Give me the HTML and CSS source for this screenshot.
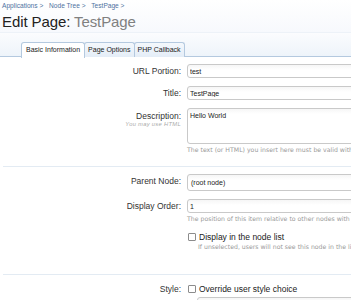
FILE: index.html
```html
<!DOCTYPE html>
<html lang="en">
<head>
  <meta charset="UTF-8">
  <title>Edit Page: TestPage</title>
  <link rel="stylesheet" href="styles.css">
</head>
<body>
  <div class="titleBar">
    <div class="breadcrumb">
      <a href="#">Applications &gt;</a>
      <a href="#">Node Tree &gt;</a>
      <a href="#">TestPage &gt;</a>
    </div>
    <h1>Edit Page: <em>TestPage</em></h1>
  </div>

  <div class="tabBar">
    <ul class="tabs">
      <li class="active">Basic Information</li>
      <li>Page Options</li>
      <li>PHP Callback</li>
    </ul>
  </div>

  <form class="xenForm">
    <fieldset>
      <div class="ctrlUnit">
        <label class="lbl">URL Portion:</label>
        <div class="ctrl"><input class="textCtrl" type="text" value="test"></div>
      </div>
      <div class="ctrlUnit">
        <label class="lbl">Title:</label>
        <div class="ctrl"><input class="textCtrl" type="text" value="TestPage"></div>
      </div>
      <div class="ctrlUnit">
        <label class="lbl top">Description:<span class="hint">You may use HTML</span></label>
        <div class="ctrl">
          <textarea class="textCtrl">Hello World</textarea>
          <p class="explain">The text (or HTML) you insert here must be valid within a page element.</p>
        </div>
      </div>
    </fieldset>

    <fieldset>
      <div class="ctrlUnit">
        <label class="lbl">Parent Node:</label>
        <div class="ctrl"><div class="textCtrl select">(root node)</div></div>
      </div>
      <div class="ctrlUnit">
        <label class="lbl">Display Order:</label>
        <div class="ctrl">
          <input class="textCtrl" type="text" value="1">
          <p class="explain">The position of this item relative to other nodes with the same parent.</p>
        </div>
      </div>
      <div class="ctrlUnit check">
        <span class="lbl"></span>
        <div class="ctrl">
          <label class="checkRow"><input type="checkbox"> Display in the node list</label>
          <p class="explain indent">If unselected, users will not see this node in the list.</p>
        </div>
      </div>
    </fieldset>

    <fieldset class="last">
      <div class="ctrlUnit">
        <label class="lbl">Style:</label>
        <div class="ctrl">
          <label class="checkRow"><input type="checkbox"> Override user style choice</label>
          <div class="textCtrl select sub"></div>
        </div>
      </div>
    </fieldset>
  </form>
</body>
</html>
```

FILE: styles.css
```css
:root {
  --link: #4f72a0;
  --text: #333;
  --muted: #9a9a9a;
  --border: #c9c9c9;
  --line: #e3ebf3;
  --tab: #b4c9df;
}
* { box-sizing: border-box; margin: 0; padding: 0; }
html, body { overflow: hidden; }
body {
  width: 351px;
  height: 300px;
  font-family: 'Liberation Sans', Arial, sans-serif;
  color: var(--text);
  background: #fff;
}
.titleBar {
  height: 33px;
  padding: 1px 2px 0;
  background: linear-gradient(#fff, #f7f9fd);
  border-bottom: 1px solid #edf2f8;
}
.breadcrumb {
  font-size: 6.6px;
  line-height: 9px;
}
.breadcrumb a {
  color: var(--link);
  text-decoration: none;
  margin-right: 4px;
}
h1 {
  font-size: 15px;
  font-weight: normal;
  line-height: 18px;
  margin-top: 3px;
  color: #222;
  letter-spacing: -0.1px;
}
h1 em { font-style: normal; color: #808080; }

.tabBar {
  height: 24px;
  padding: 9px 0 0 21px;
  background: linear-gradient(#fbfcfe, #eef4fa);
  border-bottom: 1px solid var(--tab);
}
.tabs {
  display: flex;
  list-style: none;
  height: 15px;
}
.tabs li {
  height: 15px;
  padding: 0 3px;
  font-size: 7px;
  line-height: 14px;
  color: #222;
  border: 1px solid var(--tab);
  border-bottom: none;
  border-radius: 3px 3px 0 0;
  background: linear-gradient(#f4f8fc, #e4edf7);
  margin-right: -1px;
}
.tabs li.active {
  background: #fff;
  height: 16px;
  padding: 0 4px;
  position: relative;
  z-index: 1;
}

fieldset {
  border: none;
  border-bottom: 1px solid var(--line);
  margin: 0 0 0 3px;
  padding: 7px 0 0;
}
fieldset:first-child { padding-bottom: 12px; }
fieldset:nth-child(2) { padding-bottom: 23px; }
fieldset.last { border-bottom: none; padding-top: 7px; }

.ctrlUnit {
  display: grid;
  grid-template-columns: 178px 1fr;
  column-gap: 6px;
  margin-bottom: 8px;
}
.ctrlUnit:last-child { margin-bottom: 0; }
.lbl {
  text-align: right;
  font-size: 8.5px;
  line-height: 14px;
  color: var(--text);
}
.lbl .hint {
  display: block;
  font-size: 5.8px;
  line-height: 6px;
  font-style: italic;
  color: #aaa;
  letter-spacing: 0.3px;
  margin-top: -1px;
}
.lbl.top { padding-top: 2px; line-height: 12px; }

.textCtrl {
  display: block;
  width: 220px;
  height: 14px;
  padding: 0 2px;
  font-family: 'Liberation Sans', Arial, sans-serif;
  font-size: 7px;
  line-height: 12px;
  color: #222;
  background: linear-gradient(#f6f6f6, #fff 5px);
  border: 1px solid var(--border);
  border-radius: 3px;
  outline: none;
}
textarea.textCtrl {
  height: 36px;
  padding-top: 2px;
  line-height: 10px;
  resize: none;
}
.textCtrl.select {
  height: 17px;
  line-height: 15px;
  padding-left: 3px;
}
.textCtrl.sub {
  margin: 1px 0 0 10px;
  height: 17px;
}
.explain {
  font-family: 'DejaVu Sans', Verdana, sans-serif;
  font-size: 6.2px;
  line-height: 8px;
  color: var(--muted);
  white-space: nowrap;
  margin-top: 2px;
}
.explain.indent { padding-left: 11px; margin-top: 0; }

.checkRow {
  display: flex;
  align-items: center;
  gap: 3px;
  font-size: 8.5px;
  line-height: 12px;
  height: 12px;
  color: #222;
  padding-left: 1px;
}
.last .checkRow { height: 14px; line-height: 14px; }
.checkRow input {
  appearance: none;
  width: 8px;
  height: 8px;
  border: 1px solid #8c8c8c;
  border-radius: 1px;
  background: #fff;
  margin: 0;
}
```
